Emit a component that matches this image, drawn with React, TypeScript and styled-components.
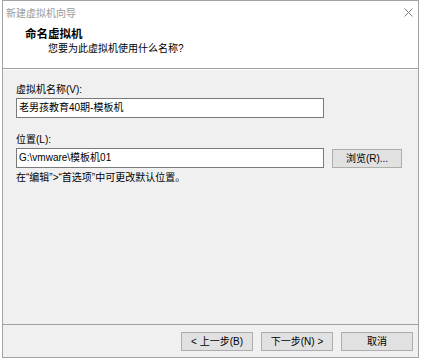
import React from 'react'
import styled, { createGlobalStyle } from 'styled-components'

const Global = createGlobalStyle`
  body {
    margin:0;
    background:#fff;
    font-family:"Liberation Sans","Noto Sans CJK SC",sans-serif;
    font-size:10px;
    color:#000;
  }
`

const Window = styled.div`
  margin-left:2px;
  width:417px;
  height:358px;
  box-sizing:border-box;
  border:1px solid #a3a3a3;
  background:#f0f0f0;
  display:flex;
  flex-direction:column;
`

const Top = styled.div`
  background:#fff;
  height:67px;
  border-bottom:1px solid #a0a0a0;
  box-shadow:0 1px 0 #fff;
`

const TitleBar = styled.div`
  height:23px;
  display:flex;
  align-items:center;
  justify-content:space-between;
  padding:0 5px 0 3px;
  color:#9a9a9a;
  font-size:10px;
`

const Close = styled.svg`
  width:9px;
  height:9px;
  margin-top:-1px;
`

const Heading = styled.div`
  padding-left:22px;
  margin-top:3px;
  font-size:11.5px;
  font-weight:700;
  line-height:14px;
`

const SubHeading = styled.div`
  padding-left:45px;
  margin-top:1px;
  line-height:14px;
`

const Body = styled.div`
  flex:1;
  padding:14px 13px 0 13px;
  display:flex;
  flex-direction:column;
`

const Label = styled.div<{ $gap?: number }>`
  line-height:14px;
  margin-top:${p => p.$gap ?? 0}px;
  margin-bottom:1px;
`

const Row = styled.div`
  display:flex;
  align-items:center;
  gap:8px;
`

const Field = styled.div`
  width:308px;
  height:20px;
  box-sizing:border-box;
  border:1px solid #7a7a7a;
  background:#fff;
  padding:0 2px;
  line-height:18px;
  white-space:nowrap;
`

const Note = styled.div`
  margin-top:3px;
  line-height:14px;
`

const Button = styled.button<{ $w?: number }>`
  width:${p => p.$w ?? 72}px;
  height:19px;
  padding:0;
  border:1px solid #adadad;
  background:#e1e1e1;
  font-family:inherit;
  font-size:10px;
  color:#000;
  line-height:17px;
`

const Footer = styled.div`
  height:33px;
  box-sizing:border-box;
  border-top:1px solid #a0a0a0;
  display:flex;
  justify-content:flex-end;
  align-items:flex-start;
  gap:8px;
  padding:7px 5px 0 0;
`

const App: React.FC = () => {
  return (
    <>
      <Global />
      <Window>
        <Top>
          <TitleBar>
            <span>新建虚拟机向导</span>
            <Close viewBox="0 0 9 9">
              <path d="M0.5 0.5 L8.5 8.5 M8.5 0.5 L0.5 8.5" stroke="#808080" strokeWidth="1" />
            </Close>
          </TitleBar>
          <Heading>命名虚拟机</Heading>
          <SubHeading>您要为此虚拟机使用什么名称?</SubHeading>
        </Top>
        <Body>
          <Label>虚拟机名称(V):</Label>
          <Field>老男孩教育40期-模板机</Field>
          <Label $gap={15}>位置(L):</Label>
          <Row>
            <Field>G:\vmware\模板机01</Field>
            <Button $w={70}>浏览(R)...</Button>
          </Row>
          <Note>在“编辑”&gt;“首选项”中可更改默认位置。</Note>
        </Body>
        <Footer>
          <Button>&lt; 上一步(B)</Button>
          <Button>下一步(N) &gt;</Button>
          <Button>取消</Button>
        </Footer>
      </Window>
    </>
  )
}

export default App
